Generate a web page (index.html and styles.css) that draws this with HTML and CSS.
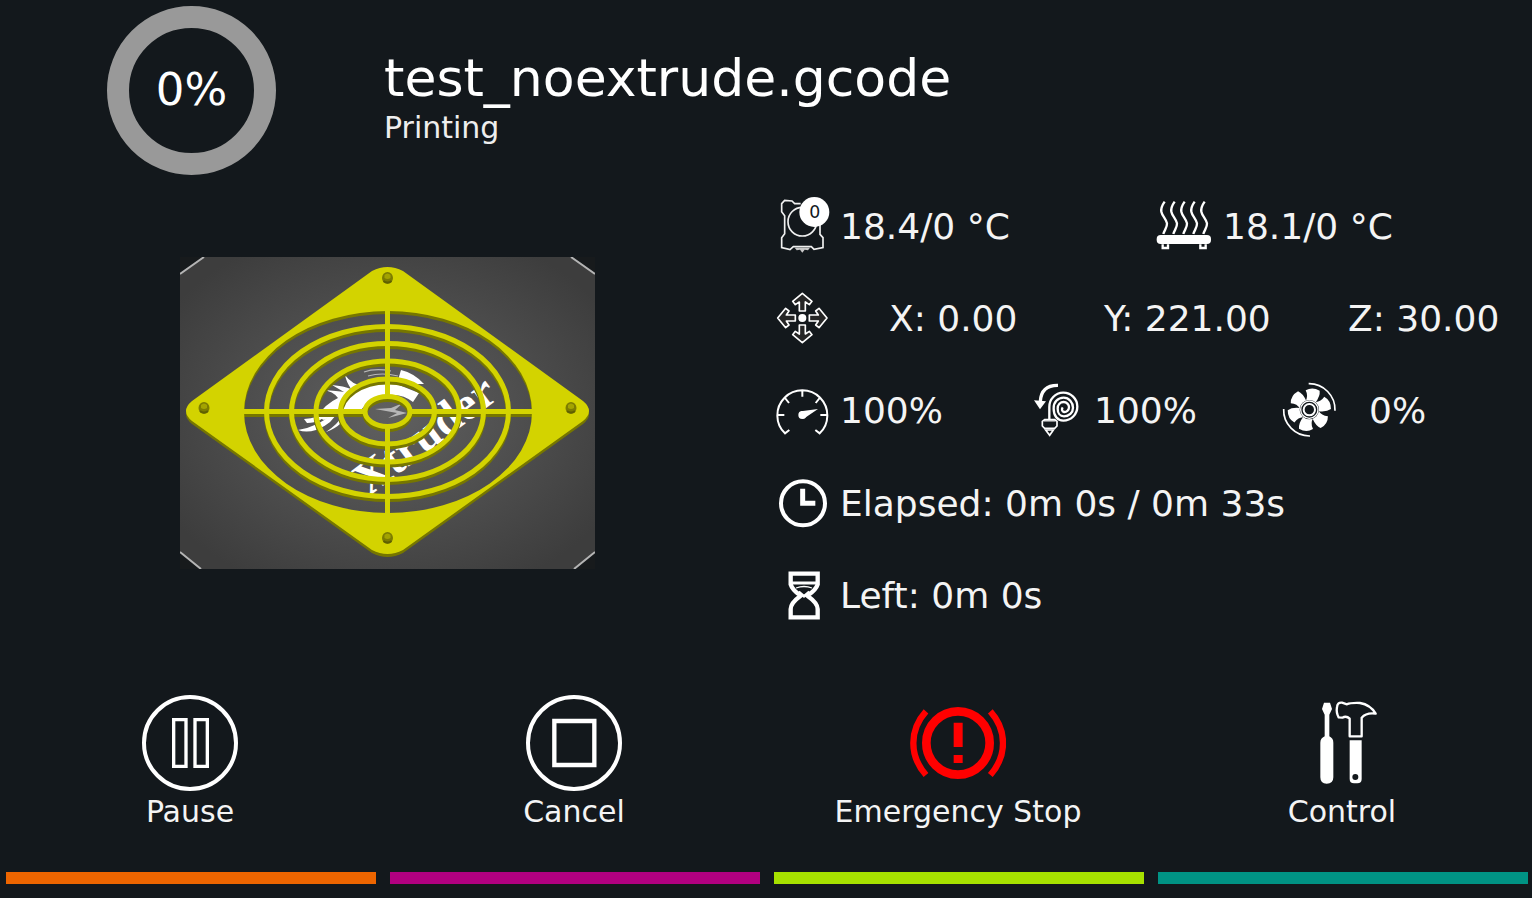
FILE: index.html
```html
<!DOCTYPE html>
<html lang="en">
<head>
<meta charset="utf-8">
<meta name="viewport" content="width=device-width, initial-scale=1">
<title>Printing</title>
<link rel="stylesheet" href="styles.css">
</head>
<body>
<header class="job">
  <div class="progress"><span class="progress-value">0%</span></div>
  <div class="job-text">
    <h1 class="job-name">test_noextrude.gcode</h1>
    <p class="job-state">Printing</p>
  </div>
</header>

<main class="status">
  <div class="preview">
    <svg class="thumbnail" viewBox="0 0 415 312" role="img" aria-label="Model preview">
      <defs>
        <radialGradient id="bed" cx="0.5" cy="0.5" r="0.62">
          <stop offset="0" stop-color="#606060"/>
          <stop offset="0.5" stop-color="#4f4f4f"/>
          <stop offset="1" stop-color="#3d3d3d"/>
        </radialGradient>
        <g id="grille" fill="none" stroke-width="5">
          <ellipse cx="207.500" cy="154.500" rx="121" ry="85"/>
          <ellipse cx="207.500" cy="154.500" rx="96" ry="68"/>
          <ellipse cx="207.500" cy="154.500" rx="71.500" ry="50.500"/>
          <ellipse cx="207.500" cy="154.500" rx="47" ry="32.500"/>
          <ellipse cx="207.500" cy="154.500" rx="22.500" ry="15"/>
          <path d="M62 154.500H185M230 154.500H353M207.500 52V140M207.500 169V258"/>
        </g>
        <path id="plate" fill-rule="evenodd" d="M192 14Q207.500 6 223 14L403 144Q415 154 403 164L223 293Q207.500 301 192 293L12 164Q0 154 12 144ZM64 155A144 101 0 0 0 352 155A144 101 0 0 0 64 155Z"/>
        <g id="screw"><ellipse rx="5.500" ry="6" fill="#7c7c00"/><path d="M-3 -3Q0 -6 3 -3V0Q0 2-3 0Z" fill="#a3a300"/><path d="M-4 3Q0 6 4 3" fill="none" stroke="#5f6000" stroke-width="2"/></g>
      </defs>
      <rect width="415" height="312" fill="url(#bed)"/>
      <path d="M0 0H24L0 17ZM391 0H415V17ZM0 295L20 312H0ZM395 312L415 295V312Z" fill="#171a1c"/>
      <path d="M24 0L0 17M391 0L415 17M0 295L21 312M394 312L415 295" stroke="#b4b4b4" stroke-width="2"/>
      <g fill="#fff">
        <path d="M137 160Q145 147 158 141Q153 134 143 133Q158 134 164 135L152 128Q164 129 171 132Q166 124 165 118Q172 128 184 129Q196 124 214 126L239 136L233 145Q223 137 211 138Q192 139 181 153L161 157Q153 157 144 163Z"/>
        <path d="M221 113Q234 116 244 127L232 127L218 123Z"/>
        <path d="M118 173Q140 169 151 157L160 151Q153 167 136 173Q126 176 118 173ZM124 162Q138 161 149 154Q142 166 127 166ZM146 175Q158 167 163 158Q165 168 146 175Z"/>
        <path d="M195 152L211 151L223 146L215 153L227 156L208 161L217 156Z" opacity=".55"/>
        <path d="M184 115Q195 111 211 114M188 119Q202 115 218 119" fill="none" stroke="#b8b8b8" stroke-width="1.200"/>
        <text class="plate-logo" x="188" y="240" transform="rotate(-37 188 240)" aria-hidden="true">Xtruder</text>
      </g>
      <use href="#plate" y="3" fill="#767600"/>
      <use href="#grille" y="3" stroke="#767600"/>
      <use href="#plate" fill="#d3d300"/>
      <use href="#grille" stroke="#d3d300"/>
      <use href="#screw" x="207.500" y="21"/>
      <use href="#screw" x="24" y="151"/>
      <use href="#screw" x="391" y="151"/>
      <use href="#screw" x="207.500" y="281"/>
    </svg>
  </div>

  <div class="metrics">
    <div class="row row-temps">
      <div class="metric">
        <svg class="icon" viewBox="12 18 168 180" aria-hidden="true">
          <g fill="none" stroke="#f0f0f0" stroke-width="5">
            <path d="M92 38H74L66 30L44 28L35 38V62L44 74V128L35 140V170L60 176L70 167H124L132 175L159 170V140L150 130V100"/>
            <circle cx="97" cy="92" r="43"/>
          </g>
          <path d="M74 170H120L114 178L104 176L97 185L90 176L80 178Z" fill="#c8c8c8"/>
          <circle cx="133" cy="63" r="45" fill="#fff"/>
          <text class="badge" x="134" y="82">0</text>
        </svg>
        <span>18.4/0 °C</span>
      </div>
      <div class="metric">
        <svg class="icon" viewBox="51 18 168 180" aria-hidden="true">
          <defs><path id="wave" d="M74 32C67 42 62 52 64 62C67 76 79 84 81 97C82 108 74 116 70 129"/></defs>
          <g fill="none" stroke="#fff" stroke-width="7">
            <use href="#wave"/><use href="#wave" x="30"/><use href="#wave" x="60"/><use href="#wave" x="90"/><use href="#wave" x="120"/>
            <path d="M68 160V171H84V160M181 160V171H197V160" stroke-width="7"/>
          </g>
          <rect x="50" y="132" width="163" height="27" rx="12" fill="#fff"/>
        </svg>
        <span>18.1/0 °C</span>
      </div>
    </div>

    <div class="row row-axes">
      <svg class="icon" viewBox="12 294 168 180" aria-hidden="true">
        <defs><path id="arrow" d="M97 307L126 331L118 341L106 333V360H88V333L76 341L68 331Z"/></defs>
        <g fill="#262626" stroke="#fff" stroke-width="5" stroke-linejoin="round">
          <use href="#arrow"/>
          <use href="#arrow" transform="rotate(90 97 381)"/>
          <use href="#arrow" transform="rotate(180 97 381)"/>
          <use href="#arrow" transform="rotate(270 97 381)"/>
        </g>
        <circle cx="97" cy="381" r="12" fill="#fff"/>
      </svg>
      <span>X: 0.00</span>
      <span>Y: 221.00</span>
      <span>Z: 30.00</span>
    </div>

    <div class="row row-rates">
      <div class="metric">
        <svg class="icon" viewBox="12 33 168 180" aria-hidden="true">
          <path d="M58 180L45 190A75 75 0 1 1 149 190L136 180M97 60V80M22 135H43M172 135H151M45 84L57 99M149 84L137 99" fill="none" stroke="#fff" stroke-width="6"/>
          <path d="M93 124L144 117L101 146Z" fill="#fff"/>
          <circle cx="97" cy="135" r="12" fill="#fff"/>
        </svg>
        <span>100%</span>
      </div>
      <div class="metric">
        <svg class="icon" viewBox="24 33 168 180" aria-hidden="true">
          <path d="M114 46Q64 45 61 94" fill="none" stroke="#fff" stroke-width="10"/>
          <path d="M42 91L78 94L60 118Z" fill="#fff"/>
          <g fill="none" stroke="#fff" stroke-width="7">
            <path d="M88 147V111A42 42 0 1 1 130 152C112 152 101 137 101 116C100 97 113 83 131 83C147 83 159 97 159 113C159 128 147 139 132 139C120 139 113 129 113 116C113 104 121 96 131 96C140 96 147 104 147 112C147 121 139 127 132 126C126 125 124 118 128 112"/>
            <path d="M74 149H104L111 154V168L104 175H74L67 168V154Z" stroke-width="5"/>
            <path d="M77 180H100L89 196Z" stroke-width="5"/>
          </g>
          <path d="M72 148H106V155H72Z" fill="#fff" opacity=".7"/>
        </svg>
        <span>100%</span>
      </div>
      <div class="metric metric-fan">
        <svg class="icon" viewBox="783 33 168 180" aria-hidden="true">
          <defs><path id="blade" d="M856 95Q866 78 857 61Q877 49 899 62Q901 78 886 98Z"/></defs>
          <g fill="#fff">
            <use href="#blade"/>
            <use href="#blade" transform="rotate(60 868 119)"/>
            <use href="#blade" transform="rotate(120 868 119)"/>
            <use href="#blade" transform="rotate(180 868 119)"/>
            <use href="#blade" transform="rotate(240 868 119)"/>
            <use href="#blade" transform="rotate(300 868 119)"/>
          </g>
          <circle cx="868" cy="119" r="29" fill="#13181c"/>
          <g fill="none" stroke="#fff">
            <circle cx="868" cy="119" r="26" stroke-width="4"/>
            <circle cx="868" cy="119" r="17" stroke-width="6"/>
            <path d="M866 41A78 78 0 0 1 945 122M791 117A78 78 0 0 0 870 198" stroke-width="5"/>
          </g>
        </svg>
        <span>0%</span>
      </div>
    </div>

    <div class="row">
      <div class="metric">
        <svg class="icon" viewBox="12 311 168 180" aria-hidden="true">
          <circle cx="99" cy="399" r="66" fill="none" stroke="#fff" stroke-width="12"/>
          <path d="M98 355V399H136" fill="none" stroke="#fff" stroke-width="15"/>
        </svg>
        <span>Elapsed: 0m 0s / 0m 33s</span>
      </div>
    </div>

    <div class="row">
      <div class="metric">
        <svg class="icon" viewBox="12 589 168 180" aria-hidden="true">
          <path d="M62 612H143V644Q138 661 112 678Q143 700 143 718V743H62V718Q62 700 92 678Q67 661 62 644Z" fill="none" stroke="#fff" stroke-width="13"/>
          <path d="M62 640H143" stroke="#fff" stroke-width="9"/>
          <path d="M78 655Q102 646 126 655" fill="none" stroke="#fff" stroke-width="4"/>
          <path d="M86 666L102 680L118 666" fill="none" stroke="#fff" stroke-width="8"/>
        </svg>
        <span>Left: 0m 0s</span>
      </div>
    </div>
  </div>
</main>

<nav class="actions" aria-label="Print actions">
  <button class="action action-orange" type="button">
    <svg class="action-icon" viewBox="37 29 288 288" aria-hidden="true">
      <g fill="none" stroke="#fff">
        <circle cx="181" cy="173" r="138" stroke-width="12"/>
        <path d="M132 103H169V243H132ZM196 103H233V243H196Z" stroke-width="10"/>
      </g>
    </svg>
    <span>Pause</span>
  </button>
  <button class="action action-magenta" type="button">
    <svg class="action-icon" viewBox="1189 29 288 288" aria-hidden="true">
      <g fill="none" stroke="#fff">
        <circle cx="1333" cy="173" r="138" stroke-width="12"/>
        <path d="M1274 107H1394V239H1274Z" stroke-width="13"/>
      </g>
    </svg>
    <span>Cancel</span>
  </button>
  <button class="action action-lime" type="button">
    <svg class="action-icon" viewBox="238 15 288 288" aria-hidden="true">
      <g fill="none" stroke="#f00">
        <circle cx="382" cy="159" r="95" stroke-width="26"/>
        <path d="M286 64Q248 106 248 159T286 255M479 64Q517 106 517 159T479 255" stroke-width="19"/>
      </g>
      <path d="M369 98H396V171H369ZM369 195H396V219H369Z" fill="#f00"/>
    </svg>
    <span>Emergency Stop</span>
  </button>
  <button class="action action-teal" type="button">
    <svg class="action-icon" viewBox="42 15 288 288" aria-hidden="true">
      <g fill="#fff">
        <path d="M132 38H150L156 57L148 74V139Q160 145 160 158V262Q160 281 140 281Q121 281 121 262V158Q121 145 134 139V74L126 57Z"/>
        <path d="M209 151H245V267Q245 280 232 280H222Q209 280 209 267Z"/>
      </g>
      <circle cx="226" cy="261" r="9" fill="#13181c"/>
      <path d="M171 51Q173 36 186 38L201 43Q210 38 240 39Q271 44 287 71Q259 67 245 83V139H209V86Q199 76 187 83L176 82Q168 68 171 51Z" fill="none" stroke="#fff" stroke-width="7" stroke-linejoin="round"/>
    </svg>
    <span>Control</span>
  </button>
</nav>
</body>
</html>
```
FILE: styles.css
```css
* {
  box-sizing: border-box;
}

body {
  margin: 0;
  min-height: 100vh;
  display: grid;
  grid-template-rows: auto 1fr auto;
  background: #13181c;
  color: #fff;
  font-family: "DejaVu Sans", sans-serif;
}

.job {
  display: grid;
  grid-template-columns: 1fr 3fr;
  align-items: center;
  min-height: 180px;
}

.progress {
  justify-self: center;
  display: flex;
  align-items: center;
  justify-content: center;
  width: 169px;
  height: 169px;
  border: 22px solid #999;
  border-radius: 50%;
}

.progress-value {
  font-size: 45px;
  line-height: 52px;
}

.job-text {
  display: flex;
  flex-direction: column;
  gap: 2px;
  padding: 14px 0 0 1px;
}

.job-name,
.job-state {
  margin: 0;
  font-weight: normal;
}

.job-name {
  font-size: 52px;
  line-height: 60px;
}

.job-state {
  color: #eee;
  font-size: 30px;
  line-height: 36px;
}

.status {
  display: grid;
  grid-template-columns: 774fr 758fr;
}

.preview {
  display: flex;
  align-items: center;
  justify-content: center;
  padding-top: 4px;
}

.thumbnail {
  width: 415px;
  max-width: 90%;
}

.plate-logo {
  font: bold 47px "Liberation Serif", serif;
}

.metrics {
  display: grid;
  grid-auto-rows: 1fr;
  padding-top: 1px;
  color: #f4f4f4;
  font-size: 36px;
  line-height: 44px;
  white-space: nowrap;
}

.row {
  display: grid;
  align-items: center;
}

.row-temps {
  grid-template-columns: 383fr 375fr;
}

.row-axes {
  grid-template-columns: 115px 215fr 244fr 184fr;
}

.row-rates {
  grid-template-columns: 254fr 253fr 251fr;
}

.metric {
  display: flex;
  align-items: center;
  gap: 10px;
}

.metric-fan {
  gap: 32px;
}

.icon {
  flex: none;
  width: 56px;
  height: 60px;
  overflow: visible;
}

.badge {
  fill: #13181c;
  font-size: 52px;
  text-anchor: middle;
}

.actions {
  display: grid;
  grid-template-columns: repeat(4, 1fr);
  gap: 14px;
  padding: 0 4px 14px 6px;
}

.action {
  display: flex;
  flex-direction: column;
  align-items: center;
  gap: 3px;
  padding: 53px 2px 42px 0;
  border: 0 solid;
  border-bottom-width: 12px;
  background: none;
  color: #f4f4f4;
  font: 30px/36px "DejaVu Sans", sans-serif;
  cursor: pointer;
}

.action-icon {
  width: 96px;
  height: 96px;
}

.action-orange {
  border-color: #ed6500;
}

.action-magenta {
  border-color: #b10080;
}

.action-lime {
  border-color: #a7e100;
}

.action-teal {
  border-color: #009384;
}
```
